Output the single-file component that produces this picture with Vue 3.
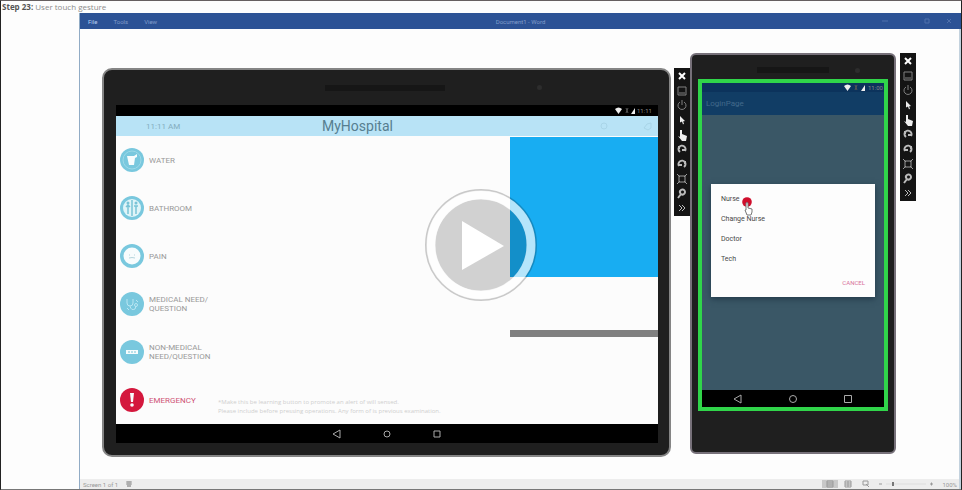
<script setup>
const tools = ['close', 'minimize', 'power', 'pointer', 'hand', 'rotateLeft', 'rotateRight', 'fit', 'zoom', 'more']
const requests = [
  { id: 'water', lines: ['WATER'] },
  { id: 'bathroom', lines: ['BATHROOM'] },
  { id: 'pain', lines: ['PAIN'] },
  { id: 'medical', lines: ['MEDICAL NEED/', 'QUESTION'] },
  { id: 'other', lines: ['NON-MEDICAL', 'NEED/QUESTION'] },
  { id: 'emergency', lines: ['EMERGENCY'] },
]
const roles = ['Nurse', 'Change Nurse', 'Doctor', 'Tech']
const devices = ['tablet', 'phone']
</script>

<template>
  <div class="page">
    <header class="step"><b>Step 23:</b> User touch gesture</header>
    <div class="stage">
      <section class="window">
        <nav class="ribbon">
          <div class="tabs">
            <a href="#" class="file">File</a><a href="#">Tools</a><a href="#">View</a>
          </div>
          <span class="doc">Document1 - Word</span>
          <div class="winctl">
            <button class="min" aria-label="Minimize"><svg viewBox="0 0 8 8"><path d="M1 4h6" /></svg></button>
            <button aria-label="Restore"><svg viewBox="0 0 8 8"><path d="M2 2h4v4H2z" /></svg></button>
            <button aria-label="Close"><svg viewBox="0 0 8 8"><path d="M2 2l4 4M6 2L2 6" /></svg></button>
          </div>
        </nav>

        <main class="canvas">
          <div v-for="device in devices" :key="device" class="rig" :class="device + '-rig'">
            <article v-if="device === 'tablet'" class="tablet">
              <div class="bezel"><i class="speaker"></i><i class="camera"></i></div>
              <div class="screen">
                <div class="signal">
                  <svg viewBox="0 0 40 9">
                    <path class="lit" d="M0 3Q3.500 0 7 3L3.500 8z" />
                    <path class="dim" d="M11 2l2 5m0-5l-2 5" />
                    <path class="lit" d="M16 8l4-6v6z" />
                    <text x="22" y="7">11:11</text>
                  </svg>
                </div>
                <div class="appbar">
                  <span class="clock">11:11 AM</span>
                  <h1>MyHospital</h1>
                  <div class="actions">
                    <svg viewBox="0 0 12 12"><circle cx="6" cy="6" r="3" /></svg>
                    <svg viewBox="0 0 12 12"><path d="M2 8l3-4 4-1v5L6 10z" /></svg>
                  </div>
                </div>
                <div class="content">
                  <ul class="requests">
                    <li v-for="item in requests" :key="item.id">
                      <button :class="item.id">
                        <svg class="badge" viewBox="0 0 24 24" aria-hidden="true">
                          <circle class="disc" cx="12" cy="12" r="12" />
                          <g v-if="item.id === 'water'">
                            <circle class="ring" cx="12" cy="12" r="9" />
                            <path class="solid" d="M7 8h7l3-2v3l-2 1-1 7H9z" />
                          </g>
                          <g v-else-if="item.id === 'bathroom'">
                            <circle class="pale" cx="12" cy="12" r="9" />
                            <path class="cut" d="M12 4v16M8 10v8M16 10v8M6 11l2-2 2 2M14 10h4" />
                            <circle class="dot" cx="8" cy="7" r="1.500" />
                            <circle class="dot" cx="16" cy="7" r="1.500" />
                          </g>
                          <g v-else-if="item.id === 'pain'">
                            <circle class="solid" cx="12" cy="12" r="8.500" />
                            <path class="cut thin light" d="M9 14q3-1 6 0M9 11h1M14 11h1" />
                          </g>
                          <g v-else-if="item.id === 'medical'">
                            <path class="faint" d="M7 7v4q0 3 3 3t3-3V7M10 14q1 5 5 3l1-3M7 16l2 2M16 8l2 2" />
                            <circle class="faint" cx="16" cy="13" r="1.500" />
                          </g>
                          <g v-else-if="item.id === 'other'">
                            <path class="solid" d="M6 10h12v4H6z" />
                            <path class="cut thin" d="M9 11v2M12 11v2M15 11v2" />
                          </g>
                          <g v-else>
                            <path class="solid" d="M10 5h4l-1 9h-2z" />
                            <circle class="solid" cx="12" cy="17" r="1.800" />
                          </g>
                        </svg>
                        <span><template v-for="(line, n) in item.lines" :key="line"><br v-if="n">{{ line }}</template></span>
                      </button>
                    </li>
                  </ul>
                  <p class="note">*Make this be learning button to promote an alert of will sensed.<br>Please include before pressing operations. Any form of is previous examination.</p>
                  <div class="panels"><div class="blue"></div><div class="rule"></div></div>
                </div>
                <div class="navkeys">
                  <button aria-label="Back"><svg viewBox="0 0 10 10"><path d="M8 1v8L1 5z" /></svg></button>
                  <button aria-label="Home"><svg viewBox="0 0 10 10"><circle cx="5" cy="5" r="3" /></svg></button>
                  <button aria-label="Recent"><svg viewBox="0 0 10 10"><path d="M2 2h6v6H2z" /></svg></button>
                </div>
              </div>
            </article>

            <article v-else class="phone">
              <div class="bezel"><i class="speaker"></i><i class="camera"></i></div>
              <div class="screen">
                <div class="phonebar">
                  <div class="signal">
                    <svg viewBox="0 0 40 9">
                      <path class="lit" d="M0 3Q3.500 0 7 3L3.500 8z" />
                      <path class="dim" d="M11 2l2 5m0-5l-2 5" />
                      <path class="lit" d="M17 8l4-6v6z" />
                      <text x="24" y="7">11:00</text>
                    </svg>
                  </div>
                  <span class="title">LoginPage</span>
                </div>
                <div class="shade">
                  <div class="dialog" role="dialog" aria-label="Role">
                    <button v-for="role in roles" :key="role" class="role">{{ role }}</button>
                    <button class="cancel">CANCEL</button>
                    <svg class="finger" viewBox="0 0 14 20" aria-hidden="true">
                      <circle cx="6" cy="6" r="4.800" />
                      <path d="M5 7q1-1 2 0v5l4 1v3l-1 3H6l-2-5h1z" />
                    </svg>
                  </div>
                </div>
                <div class="navkeys">
                  <button aria-label="Back"><svg viewBox="0 0 10 10"><path d="M8 1v8L1 5z" /></svg></button>
                  <button aria-label="Home"><svg viewBox="0 0 10 10"><circle cx="5" cy="5" r="3.500" /></svg></button>
                  <button aria-label="Recent"><svg viewBox="0 0 10 10"><path d="M1.500 1.500h7v7h-7z" /></svg></button>
                </div>
              </div>
            </article>

            <div class="tools">
              <button v-for="tool in tools" :key="tool" :aria-label="tool">
                <svg viewBox="0 0 12 12" :class="tool">
                  <path v-if="tool === 'close'" d="M3 3l6 6M9 3L3 9" />
                  <path v-else-if="tool === 'minimize'" d="M2 2h8v8H2zM3 8h6" />
                  <path v-else-if="tool === 'power'" d="M4 3a4 4 0 1 0 4 0M6 1v5" />
                  <path v-else-if="tool === 'pointer'" d="M4 2l5 5-2 .5 1 2-1 1-1-3-2 1z" />
                  <path v-else-if="tool === 'hand'" d="M4 1h2v4l5 2-1 5H6L2 7l2 1z" />
                  <path v-else-if="tool === 'rotateLeft'" d="M4 9a3.500 3.500 0 1 1 5-1M9 7H6M3 3v3" />
                  <path v-else-if="tool === 'rotateRight'" d="M8 9a3.500 3.500 0 1 0-5-1M3 7h3M9 3v3" />
                  <path v-else-if="tool === 'fit'" d="M3 3h6v6H3zM1 1l3 3M11 1L8 4M1 11l3-3M11 11L8 8" />
                  <path v-else-if="tool === 'zoom'" d="M5 3a2.500 2.500 0 1 1 3 4 2.500 2.500 0 0 1-3-4M5 7l-3 4" />
                  <path v-else d="M3 3l3 3-3 3M6 3l3 3-3 3" />
                </svg>
              </button>
            </div>
          </div>
        </main>

        <footer class="status">
          <span>Screen 1 of 1</span>
          <svg class="proof" viewBox="0 0 8 8"><path d="M1 2h6M1 4h6M2 6h4M3 1v6M5 1v6" /></svg>
          <div class="views">
            <svg class="active" viewBox="0 0 16 8"><path d="M5 1h6v6H5zM5 3h6M5 5h6" /></svg>
            <svg viewBox="0 0 16 8"><path d="M5 1h6v6H5zM5 3h6M5 5h6M8 1v6" /></svg>
            <svg viewBox="0 0 16 8"><path d="M5 1h5v4H5zM8 4l3 3" /></svg>
            <svg class="scale" viewBox="0 0 56 8"><path d="M1 4h3M52 4h3M53.500 2.500v3" /><path class="track" d="M8 4h40" /><path class="thumb" d="M15 2v4" /></svg>
            <span>100%</span>
          </div>
        </footer>
      </section>
      <button class="play" aria-label="Play video">
        <svg viewBox="0 0 112 112">
          <circle class="edge" cx="56" cy="56" r="55" />
          <circle class="glass" cx="56" cy="56" r="46" />
          <circle class="band" cx="56" cy="56" r="50" />
          <path d="M37 32v49l42-24z" />
        </svg>
      </button>
    </div>
  </div>
</template>

<style>
body { margin: 0; background: #fdfdfd; }
</style>

<style scoped>
* { box-sizing: border-box; }
button { display: flex; align-items: center; padding: 0; border: 0; background: none; font: inherit; color: inherit; cursor: pointer; }
svg { display: block; fill: none; stroke: currentColor; }
.page { display: flex; flex-direction: column; min-height: 100vh; border: 1px solid #222; border-top: 1px solid #655f60; border-bottom: 2px solid #777; font: 7px/9px Roboto, "Liberation Sans", sans-serif; }
.step { height: 12px; padding-left: 1px; font: 8px/11px "Open Sans", "Liberation Sans", sans-serif; color: #8c8c8c; }
.step b { color: #555; }
.stage { flex: 1; display: flex; }
.window { flex: 1; display: flex; flex-direction: column; margin-left: 78px; border-left: 1px solid #91abc5; border-right: 2px solid #c3d2de; }
.ribbon { display: grid; grid-template-columns: 1fr auto 1fr; align-items: center; height: 16px; padding: 0 8px 0 8px; margin-right: -2px; background: #2c5295; color: #819dcb; font-size: 6px; }
.ribbon a { color: inherit; text-decoration: none; }
.ribbon .file { color: #b9d0f2; }
.tabs { display: flex; gap: 16px; }
.winctl { display: flex; justify-content: flex-end; gap: 14px; }
.winctl .min { margin-right: 20px; }
.winctl svg { width: 8px; height: 8px; color: #4f70ac; }
.canvas { flex: 1; display: flex; align-items: flex-start; padding: 24px 43px 22px 22px; }
.rig { display: flex; align-items: flex-start; gap: 4px; }
.tablet-rig { flex: 1; gap: 3px; padding-top: 15px; }
.tablet { flex: 1; border: 2px solid #858585; border-radius: 10px; padding: 0 11px 12px 12px; background: #1f1f1f; }
.bezel { display: flex; align-items: center; }
.tablet .bezel { height: 35px; padding-left: 209px; gap: 92px; }
.speaker { width: 120px; height: 6px; background: #161616; }
.camera { width: 5px; height: 5px; border-radius: 50%; background: #2d2d2d; }
.signal { display: flex; justify-content: flex-end; background: #000; }
.signal svg { width: 40px; height: 9px; color: #ddd; }
.signal text { fill: #888; stroke: none; font-size: 6px; }
.lit { fill: #eee; stroke: none; }
.dim { stroke: #555; }
.tablet .signal { height: 11px; padding-top: 1px; padding-right: 3px; }
.appbar { display: flex; align-items: center; height: 20px; padding: 0 4px 0 30px; background: #b8e3f6; color: #83adbe; font-size: 8px; }
.clock { flex: 0 0 176px; }
.appbar h1 { flex: 1; margin: 0; font: 14px/18px Roboto, sans-serif; color: #567e90; }
.actions { display: flex; justify-content: flex-end; gap: 32px; }
.actions svg { width: 12px; height: 12px; color: #a9d5e8; }
.content { display: grid; grid-template-columns: 102px 1fr 148px; background: #fcfcfc; }
.requests { margin: 0; padding: 0 0 0 4px; list-style: none; }
.requests li { display: flex; height: 48px; }
.requests button { gap: 9px; text-align: left; white-space: nowrap; color: #999; font-size: 8px; }
.requests .badge { width: 24px; height: 24px; margin-right: -4px; }
.disc { fill: #79c8de; stroke: none; }
.emergency .disc { fill: #d4183d; }
.requests .emergency { color: #cf5275; }
.solid { fill: #f7fcfd; stroke: none; }
.ring { stroke: #9cd9e8; }
.pale { fill: #dff4f8; stroke: none; }
.cut { stroke: #79c3d6; stroke-width: 1.5; }
.cut.thin { stroke-width: 1; }
.cut.light { stroke: #b5d5dd; }
.dot { fill: #79c3d6; stroke: none; }
.faint { stroke: #b9e6f2; }
.note { align-self: end; margin: 0; padding-bottom: 8px; white-space: nowrap; font-family: "Open Sans", sans-serif; font-size: 6px; color: #cfcfcf; }
.panels { padding-top: 1px; }
.blue { height: 140px; background: #18adf2; }
.rule { height: 7px; margin-top: 53px; background: #808080; }
.navkeys { display: flex; justify-content: center; align-items: center; background: #000; color: #aaa; }
.navkeys svg { width: 10px; height: 10px; }
.tablet .navkeys { height: 19px; gap: 40px; }
.tools { display: flex; flex-direction: column; justify-content: space-between; width: 16px; height: 148px; padding: 1px 0; background: #141414; color: #bbb; }
.tools button { justify-content: center; height: 14px; }
.tools svg { width: 12px; height: 12px; }
.tools .close { color: #fff; stroke-width: 2; }
.tools .minimize, .tools .power { color: #808080; }
.tools .pointer, .tools .hand { color: #eee; fill: #eee; stroke: none; }
.tools .rotateLeft, .tools .rotateRight, .tools .zoom { stroke-width: 2; }
.tools .fit { color: #999; }
.phone { width: 206px; padding: 0 6px 41px; border: 2px solid #77717a; border-radius: 6px; background: #1f1f1f; }
.phone .bezel { height: 24px; padding: 6px 0 0 59px; gap: 26px; }
.phone .speaker { width: 72px; }
.phone .screen { border: 4px solid #30d54a; }
.phonebar { height: 32px; background: #113d65; }
.phone .signal { height: 9px; background: #0c335c; }
.title { display: block; padding: 7px 0 0 4px; font-size: 8px; color: #42698b; }
.shade { padding: 69px 9px 93px 9px; background: #3a5766; }
.dialog { position: relative; padding: 5px 10px 2px; background: #fdfdfd; box-shadow: 0 2px 6px #22394a; color: #484848; }
.role { width: 100%; height: 20px; }
.cancel { height: 26px; margin-left: auto; color: #d7709a; font-size: 6px; }
.finger { position: absolute; left: 30px; top: 12px; width: 14px; height: 20px; }
.finger circle { fill: #cf0e2c; stroke: none; }
.finger path { fill: #fff; stroke: #777; }
.phone .navkeys { height: 17px; gap: 45px; }
.status { display: flex; align-items: center; gap: 7px; height: 10px; padding: 0 2px 0 3px; background: #ededed; color: #999; font-size: 6px; }
.proof { width: 8px; height: 8px; }
.views { display: flex; align-items: center; gap: 2px; margin-left: auto; }
.views svg { width: 16px; height: 8px; }
.views .active { background: #c8c8c8; }
.views .scale { width: 56px; margin: 0 6px 0 2px; }
.track { stroke: #ddd; }
.thumb { stroke: #777; stroke-width: 2; }
.play { position: absolute; left: 50%; top: 50%; width: 112px; height: 112px; transform: translate(-50%, -50%); }
.play svg { width: 112px; height: 112px; }
.edge { stroke: #000; stroke-opacity: .2; stroke-width: 2; }
.glass { fill: #000; fill-opacity: .17; stroke: none; }
.band { stroke: #fff; stroke-opacity: .68; stroke-width: 9; }
.play path { fill: #fff; stroke: none; }
</style>
